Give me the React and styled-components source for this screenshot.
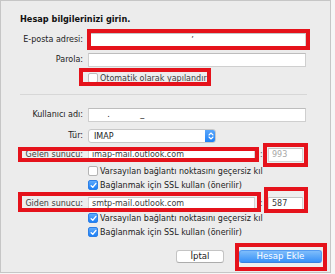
import React from 'react';
import styled, { createGlobalStyle } from 'styled-components';

const GlobalStyle = createGlobalStyle`
    html, body {
        margin: 0;
        padding: 0;
        background: #f6f6f6;
    }
    body {
        font-family: 'DejaVu Sans', 'Liberation Sans', sans-serif;
    }
`;

const Window = styled.div`
    box-sizing: border-box;
    width: 331px;
    height: 273px;
    background: #ececec;
    border: 1px solid #c6c6c6;
    padding: 12px 8px 0 17px;
    display: flex;
    flex-direction: column;
    font-size: 8px;
    color: #222;
`;

const Title = styled.div`
    margin-left: 2px;
    font-weight: bold;
    font-size: 8.2px;
    line-height: 12px;
    color: #111;
`;

const Row = styled.div`
    display: grid;
    grid-template-columns: ${p => p.$cols || '65px auto'};
    column-gap: 5px;
    align-items: center;
    justify-content: start;
    margin-top: ${p => p.$top || 0}px;
`;

const Label = styled.span`
    text-align: right;
    white-space: nowrap;
    line-height: 14px;
`;

const Field = styled.div`
    box-sizing: border-box;
    width: ${p => p.$width}px;
    height: 14px;
    background: #fff;
    border: 1px solid #cfcfcf;
    border-top-color: #bdbdbd;
    padding: 0 3px;
    line-height: 12px;
    white-space: pre;
    color: ${p => (p.$muted ? '#9b9b9b' : '#1a1a1a')};
    overflow: hidden;
`;

const Inline = styled.div`
    display: flex;
    align-items: center;
    gap: 5px;
`;

const Colon = styled.span`
    width: 3px;
    line-height: 14px;
    color: #555;
`;

const Marked = styled.div`
    position: relative;
    justify-self: start;
    width: fit-content;
    display: ${p => (p.$block ? 'grid' : 'inline-flex')};
    ${p => (p.$block ? 'grid-template-columns: 65px auto; column-gap: 5px; align-items: center;' : '')}
    &::after {
        content: '';
        position: absolute;
        top: ${p => p.$t}px;
        right: ${p => p.$r}px;
        bottom: ${p => p.$b}px;
        left: ${p => p.$l}px;
        border: 4px solid #e5121b;
        background: rgba(255, 255, 255, 0.12);
        pointer-events: none;
    }
`;

const CheckRow = styled.label`
    display: flex;
    align-items: center;
    gap: 2px;
    height: ${p => p.$h || 14}px;
    padding-left: 70px;
    margin-top: ${p => p.$top || 0}px;
    white-space: nowrap;
`;

const CheckInner = styled.span`
    display: inline-flex;
    align-items: center;
    gap: 2px;
    height: 12px;
`;

const Box = styled.span`
    box-sizing: border-box;
    width: 10px;
    height: 10px;
    border-radius: 2px;
    display: inline-flex;
    align-items: center;
    justify-content: center;
    background: ${p => (p.$checked ? 'linear-gradient(#5eaafc, #1b7ff5)' : '#fff')};
    border: 1px solid ${p => (p.$checked ? '#2d7fe6' : '#b4b4b4')};
`;

const Separator = styled.div`
    height: 1px;
    width: 287px;
    margin: 10px 0 0 2px;
    background: #d7d7d7;
`;

const Select = styled.div`
    box-sizing: border-box;
    width: 128px;
    height: 14px;
    display: flex;
    align-items: center;
    justify-content: space-between;
    background: #fff;
    border: 1px solid #c8c8c8;
    border-radius: 3px;
    padding-left: 5px;
    overflow: hidden;
`;

const Stepper = styled.span`
    width: 11px;
    height: 14px;
    margin-right: -1px;
    display: flex;
    align-items: center;
    justify-content: center;
    background: linear-gradient(#5ea9fb, #1a7ef5);
    border-radius: 0 3px 3px 0;
`;

const Buttons = styled.div`
    display: flex;
    justify-content: flex-end;
    gap: 15px;
    margin-top: 11px;
`;

const Button = styled.button`
    box-sizing: border-box;
    width: ${p => p.$width}px;
    height: 13px;
    padding: 0;
    font-family: inherit;
    font-size: 8.6px;
    line-height: 11px;
    border-radius: 3px;
    border: 1px solid ${p => (p.$primary ? '#3d8ef0' : '#c4c4c4')};
    border-bottom-color: ${p => (p.$primary ? '#1e6fd8' : '#acacac')};
    color: ${p => (p.$primary ? '#fff' : '#222')};
    background: ${p => (p.$primary ? 'linear-gradient(#6db4fb, #1d83f7)' : '#fff')};
`;

const Check = () => (
    <svg width="7" height="7" viewBox="0 0 8 8">
        <path d="M1.3 4.2 L3.2 6 L6.8 1.6" fill="none" stroke="#fff" strokeWidth="1.5" strokeLinecap="round" strokeLinejoin="round" />
    </svg>
);

const Arrows = () => (
    <svg width="6" height="10" viewBox="0 0 6 10">
        <path d="M1 4 L3 2 L5 4 M1 6 L3 8 L5 6" fill="none" stroke="#fff" strokeWidth="1.1" strokeLinecap="round" strokeLinejoin="round" />
    </svg>
);

const Checkbox = ({ checked, children }) => (
    <>
        <Box $checked={checked}>{checked && <Check />}</Box>
        <span>{children}</span>
    </>
);

const App = () => (
    <>
        <GlobalStyle />
        <Window>
            <Title>Hesap bilgilerinizi girin.</Title>

            <Row $top={8}>
                <Label>E-posta adresi:</Label>
                <Marked $t={-4} $r={-4} $b={-3} $l={-1}>
                    <Field $width={218}>{'                                       \u02bc'}</Field>
                </Marked>
            </Row>

            <Row $top={6}>
                <Label>Parola:</Label>
                <Field $width={218} />
            </Row>

            <CheckRow $top={5} $h={12}>
                <Marked $t={-4} $r={-4} $b={-2} $l={-9}>
                    <CheckInner>
                        <Checkbox>Otomatik olarak yapılandır</Checkbox>
                    </CheckInner>
                </Marked>
            </CheckRow>

            <Separator />

            <Row $top={13}>
                <Label>Kullanıcı adı:</Label>
                <Field $width={218}>{'      .            _'}</Field>
            </Row>

            <Row $top={7}>
                <Label>Tür:</Label>
                <Select>
                    IMAP
                    <Stepper><Arrows /></Stepper>
                </Select>
            </Row>

            <Row $top={5} $cols="auto auto">
                <Marked $block $t={-1} $r={-4} $b={0} $l={0}>
                    <Label>Gelen sunucu:</Label>
                    <Field $width={167}>imap-mail.outlook.com</Field>
                </Marked>
                <Inline>
                    <Colon>:</Colon>
                    <Marked $t={-5} $r={-5} $b={-5} $l={-5}>
                        <Field $width={35} $muted>993</Field>
                    </Marked>
                </Inline>
            </Row>

            <CheckRow $top={2}>
                <Checkbox>Varsayılan bağlantı noktasını geçersiz kıl</Checkbox>
            </CheckRow>
            <CheckRow>
                <Checkbox checked>Bağlanmak için SSL kullan (önerilir)</Checkbox>
            </CheckRow>

            <Row $top={5} $cols="auto auto">
                <Marked $block $t={-5} $r={-6} $b={-1} $l={0}>
                    <Label>Giden sunucu:</Label>
                    <Field $width={167}>smtp-mail.outlook.com</Field>
                </Marked>
                <Inline>
                    <Colon>:</Colon>
                    <Marked $t={-10} $r={-5} $b={-2} $l={-4}>
                        <Field $width={35}>587</Field>
                    </Marked>
                </Inline>
            </Row>

            <CheckRow>
                <Checkbox checked>Varsayılan bağlantı noktasını geçersiz kıl</Checkbox>
            </CheckRow>
            <CheckRow>
                <Checkbox checked>Bağlanmak için SSL kullan (önerilir)</Checkbox>
            </CheckRow>

            <Buttons>
                <Button $width={48}>İptal</Button>
                <Marked $t={-7} $r={-5} $b={-8} $l={-4}>
                    <Button $width={83} $primary>Hesap Ekle</Button>
                </Marked>
            </Buttons>
        </Window>
    </>
);

export default App;
